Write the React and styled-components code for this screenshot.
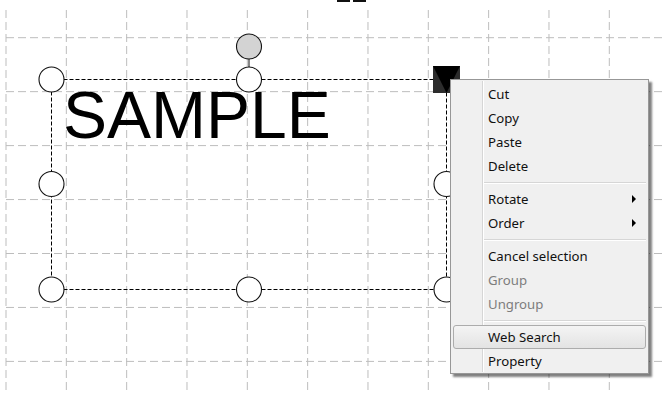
import React from 'react';
import styled, { createGlobalStyle, css } from 'styled-components';

const Global = createGlobalStyle`
  html, body { margin: 0; padding: 0; background: #fff; }
  body { width: 663px; height: 394px; overflow: hidden; }
`;

const Canvas = styled.div`
  position: relative;
  width: 663px;
  height: 394px;
  overflow: hidden;
  background: #fff;
`;

const DrawingLayer = styled.svg`
  position: absolute;
  left: 0;
  top: 0;
  width: 663px;
  height: 394px;
  pointer-events: none;
`;

const ToolbarStub = styled.div`
  position: absolute;
  top: 0;
  left: 337px;
  display: flex;
  gap: 3px;
`;

const StubBlock = styled.div`
  width: 13px;
  height: 2px;
  background: #111;
`;

const SampleText = styled.div`
  position: absolute;
  left: 63px;
  top: 82px;
  font-family: "Liberation Sans", Arial, sans-serif;
  font-size: 66px;
  line-height: 1;
  color: #000;
  white-space: nowrap;
`;

const CornerHandle = styled.div`
  position: absolute;
  left: 433px;
  top: 66px;
  width: 27px;
  height: 27px;
  background: #2c2c2c;
  display: flex;
`;

const Menu = styled.div`
  position: absolute;
  left: 450px;
  top: 79px;
  width: 199px;
  box-sizing: border-box;
  background: #f0f0f0;
  border: 1px solid #979797;
  box-shadow: 3px 3px 2px rgba(0, 0, 0, 0.5);
  padding: 2px 2px 0 2px;
  display: flex;
  flex-direction: column;
  font-family: "Noto Sans", "DejaVu Sans", sans-serif;
  font-size: 13.2px;
  &::before {
    content: '';
    position: absolute;
    left: 31px;
    top: 1px;
    bottom: 1px;
    width: 1px;
    background: #d6d6d6;
    box-shadow: 1px 0 0 #fff;
  }
`;

const Item = styled.div`
  position: relative;
  height: 24px;
  box-sizing: border-box;
  display: flex;
  align-items: center;
  padding-left: 34px;
  border: 1px solid transparent;
  border-radius: 3px;
  color: ${p => (p.$disabled ? '#7d7d7d' : '#111')};
  ${p =>
    p.$active &&
    css`
      border-color: #acacac;
      background: linear-gradient(#f4f4f4, #e3e3e3);
      z-index: 1;
    `}
`;

const SubArrow = styled.span`
  position: absolute;
  right: 9px;
  top: 50%;
  margin-top: -4px;
  width: 0;
  height: 0;
  border-top: 4px solid transparent;
  border-bottom: 4px solid transparent;
  border-left: 4px solid #000;
`;

const Separator = styled.div`
  height: 9px;
  box-sizing: border-box;
  padding-top: 4px;
  margin-left: 30px;
  &::after {
    content: '';
    display: block;
    height: 1px;
    background: #d6d6d6;
    border-bottom: 1px solid #fff;
  }
`;

const GRID_X0 = 6;
const GRID_DX = 60.33;
const GRID_Y0 = 37.7;
const GRID_DY = 53.95;

const vLines = Array.from({ length: 11 }, (_, i) => GRID_X0 + GRID_DX * i);
const hLines = Array.from({ length: 7 }, (_, i) => GRID_Y0 + GRID_DY * i);

const menuEntries = [
  { label: 'Cut' },
  { label: 'Copy' },
  { label: 'Paste' },
  { label: 'Delete' },
  { sep: true },
  { label: 'Rotate', sub: true },
  { label: 'Order', sub: true },
  { sep: true },
  { label: 'Cancel selection' },
  { label: 'Group', disabled: true },
  { label: 'Ungroup', disabled: true },
  { sep: true },
  { label: 'Web Search', active: true },
  { label: 'Property' },
];

const SEL = { left: 51.5, top: 79.5, right: 446.5, bottom: 289.5 };
const midX = 249;
const midY = 184;

const handles = [
  [SEL.left, SEL.top],
  [midX, SEL.top],
  [SEL.left, midY],
  [SEL.right, midY],
  [SEL.left, SEL.bottom],
  [midX, SEL.bottom],
  [SEL.right, SEL.bottom],
];

export default function App() {
  return (
    <>
      <Global />
      <Canvas>
        <DrawingLayer viewBox="0 0 663 394">
          <g stroke="#bdbdbd" strokeWidth="1" strokeDasharray="8 4">
            {vLines.map(x => (
              <line key={'v' + x} x1={x} y1={10} x2={x} y2={394} />
            ))}
            {hLines.map(y => (
              <line key={'h' + y} x1={6} y1={y} x2={663} y2={y} />
            ))}
          </g>
        </DrawingLayer>
        <ToolbarStub>
          <StubBlock />
          <StubBlock />
        </ToolbarStub>
        <SampleText>SAMPLE</SampleText>
        <DrawingLayer viewBox="0 0 663 394">
          <rect
            x={SEL.left}
            y={SEL.top}
            width={SEL.right - SEL.left}
            height={SEL.bottom - SEL.top}
            fill="none"
            stroke="#000"
            strokeWidth="1"
            strokeDasharray="4 2"
          />
          <line x1={midX} y1={59} x2={midX} y2={67} stroke="#111" strokeWidth="1" />
          <circle cx={midX} cy={46.5} r={12.5} fill="#d3d3d3" stroke="#111" strokeWidth="1.1" />
          {handles.map(([x, y]) => (
            <circle key={x + '-' + y} cx={x} cy={y} r={12.5} fill="#fff" stroke="#111" strokeWidth="1.1" />
          ))}
        </DrawingLayer>
        <CornerHandle>
          <svg width="27" height="27" viewBox="0 0 27 27">
            <polygon points="0,0 27,0 13.5,27" fill="#000" />
          </svg>
        </CornerHandle>
        <Menu>
          {menuEntries.map((e, i) =>
            e.sep ? (
              <Separator key={i} />
            ) : (
              <Item key={i} $disabled={e.disabled} $active={e.active}>
                {e.label}
                {e.sub && <SubArrow />}
              </Item>
            )
          )}
        </Menu>
      </Canvas>
    </>
  );
}
